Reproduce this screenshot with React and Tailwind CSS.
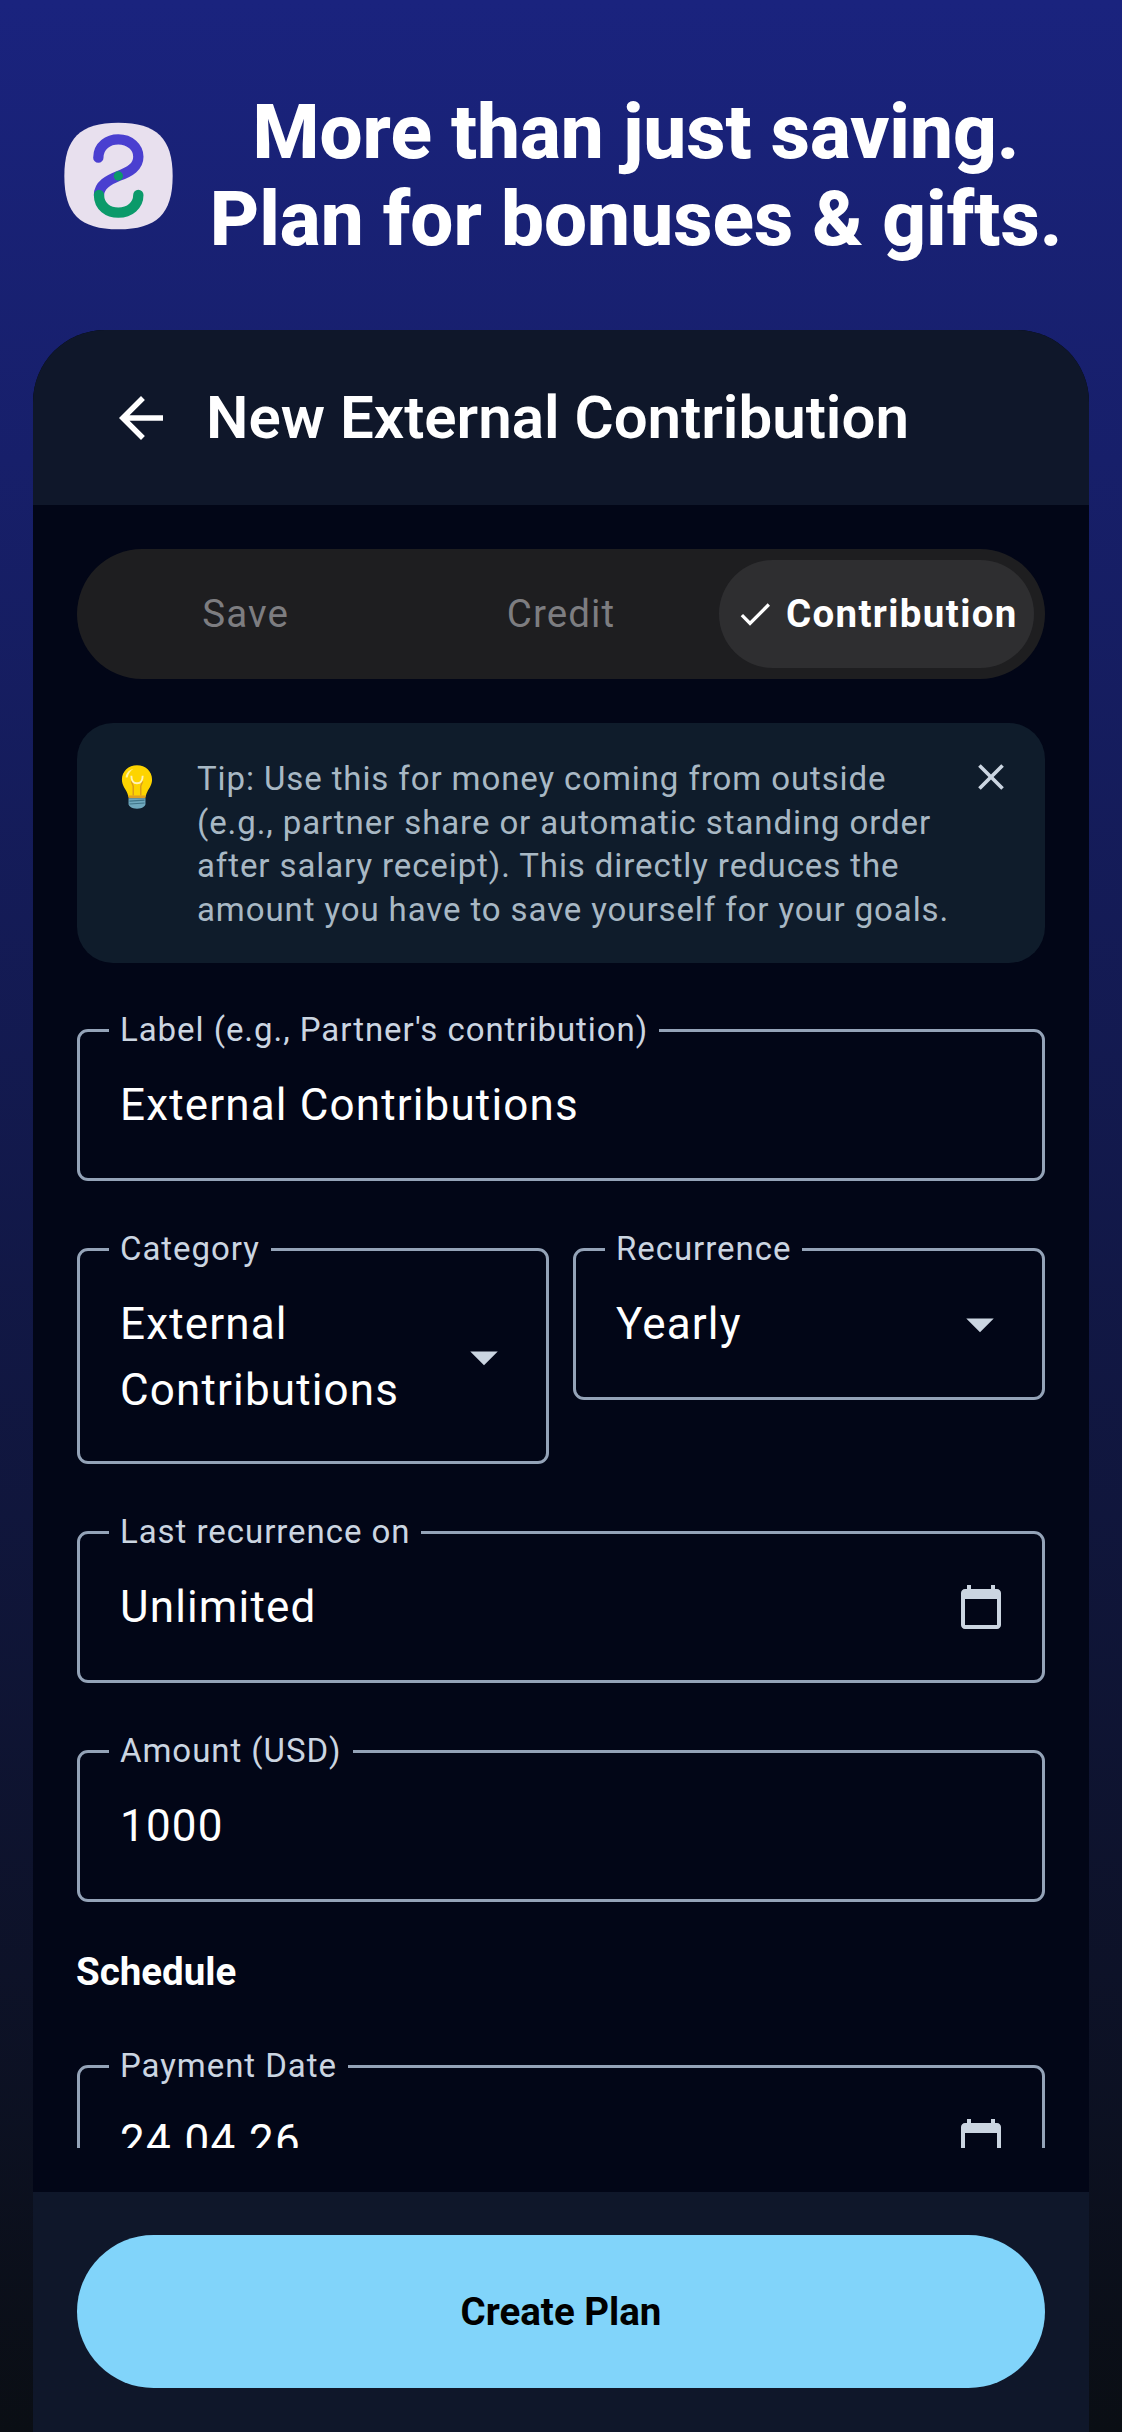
import React from "react"

const ARROW_BACK = "M20 11H7.83l5.59-5.59L12 4l-8 8 8 8 1.41-1.41L7.83 13H20v-2z"
const CHECK = "M9 16.17L4.83 12l-1.41 1.41L9 19 21 7l-1.41-1.41z"
const CLOSE = "M19 6.41L17.59 5 12 10.59 6.41 5 5 6.41 10.59 12 5 17.59 6.41 19 12 13.41 17.59 19 19 17.59 13.41 12z"
const CALENDAR = "M20 3h-1V1h-2v2H7V1H5v2H4c-1.1 0-2 .9-2 2v16c0 1.1.9 2 2 2h16c1.1 0 2-.9 2-2V5c0-1.1-.9-2-2-2zm0 18H4V8h16v13z"
const DROPDOWN = "M7 10l5 5 5-5z"

function Icon({ d, size, className }) {
  return (
    <svg width={size} height={size} viewBox="0 0 24 24" fill="currentColor" className={className}>
      <path d={d} />
    </svg>
  )
}

function Logo() {
  return (
    <svg width="140" height="140" viewBox="0 0 420 420" className="shrink-0">
      <path
        d="M205 38C320 38 368 85 368 198C368 312 320 358 205 358C90 358 43 312 43 198C43 85 90 38 205 38Z"
        fill="#e8e0ee"
      />
      <path
        d="M145 143C145 107 175 88 205 88C240 88 265 112 265 140C265 170 240 185 205 198C175 210 147 225 147 255"
        fill="none"
        stroke="#4a3fd0"
        strokeWidth="31"
        strokeLinecap="round"
      />
      <path
        d="M147 255C147 290 175 308 205 308C240 308 265 285 265 255"
        fill="none"
        stroke="#0b9a6a"
        strokeWidth="31"
        strokeLinecap="round"
      />
      <circle cx="205" cy="198" r="14" fill="#0b9a6a" />
    </svg>
  )
}

function Bulb() {
  return (
    <svg width="32" height="48" viewBox="0 0 34 48">
      <path d="M17 1C8 1 1 7.5 1 16c0 6 3 9 5 13 1 2 2 5 2 6h18c0-1 1-4 2-6 2-4 5-7 5-13C33 7.5 26 1 17 1Z" fill="#fdd400" />
      <path d="M5 14c0-4 3-8 8-9-3 2-5 5-6 9Z" fill="#fff3a0" />
      <path d="M13 33V23l-2-5M21 33V23l2-5" stroke="#d99a1c" strokeWidth="1.5" fill="none" />
      <path d="M11 12c0 6 2 8 6 8s6-2 6-8" stroke="#fff2b8" strokeWidth="2" fill="none" />
      <rect x="8" y="33" width="18" height="3" fill="#e0a020" />
      <path d="M8 36h18v6c0 2-3 5-9 5s-9-3-9-5Z" fill="#6fa8bd" />
      <path d="M9 39l16-1M9 42l16-1" stroke="#3f7488" strokeWidth="1.2" />
    </svg>
  )
}

// outlined field, the label sits in a notch of the border
function Field({ label, className = "", children }) {
  return (
    <div className={`relative rounded-[11px] border-[3px] border-[#94a3b8] ${className}`}>
      <span className="absolute top-[-19px] left-[29px] whitespace-nowrap bg-[#020617] px-[11px] text-[33px] leading-[33px] tracking-[0.95px] text-[#cbd5e1]">
        {label}
      </span>
      {children}
    </div>
  )
}

function Value({ children }) {
  return <span className="text-[44px] leading-[66px] tracking-[1.15px] text-white">{children}</span>
}

function TextField({ label, value, icon, className = "" }) {
  return (
    <Field label={label} className={`h-[152px] ${className}`}>
      <div className="flex items-center justify-between pl-[40px] pr-[37px] pt-[40px]">
        <Value>{value}</Value>
        {icon && <Icon d={CALENDAR} size={48} className="text-[#cbd5e1]" />}
      </div>
    </Field>
  )
}

export default function App() {
  return (
    <div className="flex h-[2432px] w-[1122px] flex-col overflow-hidden bg-[linear-gradient(180deg,#1a237e_0%,#0a0e14_100%)] font-['Roboto',sans-serif]">
      {/* promo header */}
      <div className="flex h-[330px] shrink-0 items-start pl-[50px] pr-[40px] pt-[89px]">
        <div className="mt-[21px]">
          <Logo />
        </div>
        <h1 className="flex-1 whitespace-nowrap text-center text-[76.5px] font-extrabold leading-[87px] text-white">
          More than just saving.
          <br />
          Plan for bonuses &amp; gifts.
        </h1>
      </div>

      <div className="mx-[33px] flex min-h-0 flex-1 flex-col overflow-hidden rounded-t-[72px] bg-[#020617]">
        {/* top bar */}
        <div className="flex h-[175px] shrink-0 items-center bg-[#0f172a] pl-[75px] text-white">
          <Icon d={ARROW_BACK} size={66} className="mr-[32px]" />
          <span className="text-[60px] font-semibold leading-[80px]">New External Contribution</span>
        </div>

        {/* scroll area, cut off above the footer */}
        <div className="mb-[44px] min-h-0 flex-1 overflow-hidden px-[44px] pt-[44px]">
          <div className="grid h-[130px] grid-cols-3 rounded-full bg-[#1e1e20] p-[11px] text-[38.5px] tracking-[1.1px]">
            <div className="flex items-center justify-center text-[#7d7d80]">Save</div>
            <div className="flex items-center justify-center text-[#7d7d80]">Credit</div>
            <div className="flex items-center justify-center whitespace-nowrap rounded-full bg-[#2e2e30] font-bold tracking-[1.35px] text-white">
              <Icon d={CHECK} size={40} className="mr-[11px]" />
              Contribution
            </div>
          </div>

          <div className="mt-[44px] flex h-[240px] rounded-[36px] bg-[#0f1c2b] pl-[44px] pr-[32px] pt-[34px]">
            <div className="mt-[6px] w-[76px] shrink-0">
              <Bulb />
            </div>
            <p className="flex-1 whitespace-nowrap text-[33px] leading-[43.5px] tracking-[0.9px] text-[#a8b8c4]">
              Tip: Use this for money coming from outside
              <br />
              (e.g., partner share or automatic standing order
              <br />
              after salary receipt). This directly reduces the
              <br />
              amount you have to save yourself for your goals.
            </p>
            <Icon d={CLOSE} size={44} className="mt-[-2px] shrink-0 text-[#cbd5e1]" />
          </div>

          <TextField label="Label (e.g., Partner's contribution)" value="External Contributions" className="mt-[66px]" />

          <div className="mt-[67px] flex items-start gap-[24px]">
            <Field label="Category" className="h-[216px] flex-1">
              <div className="flex items-center justify-between pl-[40px] pr-[29px] pt-[40px]">
                <Value>
                  External
                  <br />
                  Contributions
                </Value>
                <Icon d={DROPDOWN} size={66} className="text-[#cbd5e1]" />
              </div>
            </Field>
            <Field label="Recurrence" className="h-[152px] flex-1">
              <div className="flex items-center justify-between pl-[40px] pr-[29px] pt-[40px]">
                <Value>Yearly</Value>
                <Icon d={DROPDOWN} size={66} className="text-[#cbd5e1]" />
              </div>
            </Field>
          </div>

          <TextField label="Last recurrence on" value="Unlimited" icon className="mt-[67px]" />
          <TextField label="Amount (USD)" value="1000" className="mt-[67px]" />

          <h2 className="mt-[48px] ml-[-1px] text-[38.5px] font-bold leading-[44px] text-white">Schedule</h2>

          <TextField label="Payment Date" value="24.04.26" icon className="mt-[71px]" />
        </div>

        {/* footer */}
        <div className="h-[240px] shrink-0 bg-[#0f172a] px-[44px] pt-[43px]">
          <button className="h-[153px] w-full rounded-full bg-[#81d4fa] text-[38.5px] font-bold text-black">
            Create Plan
          </button>
        </div>
      </div>
    </div>
  )
}
